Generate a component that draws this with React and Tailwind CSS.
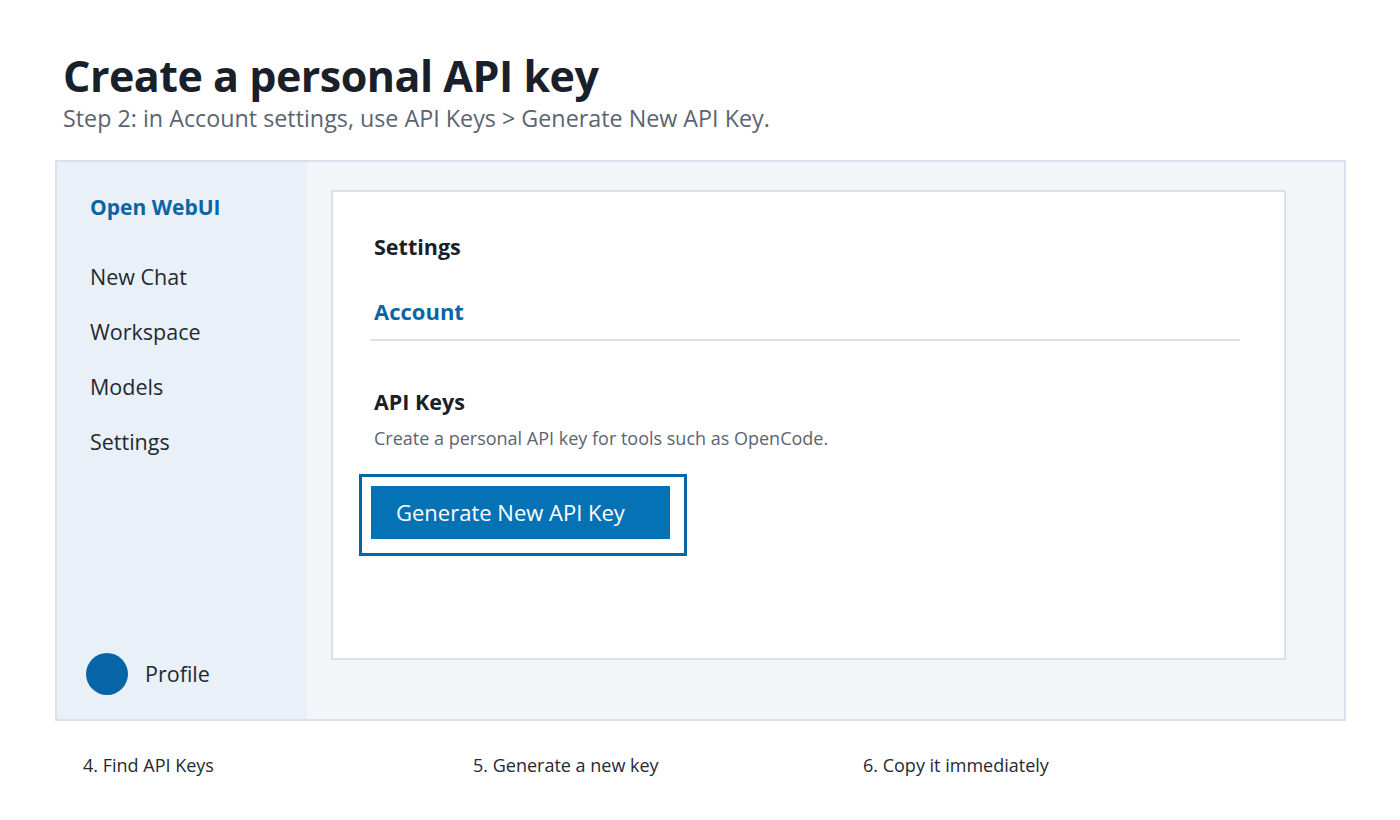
import React from 'react';

const navItems = ['New Chat', 'Workspace', 'Models', 'Settings'];
const steps = ['4. Find API Keys', '5. Generate a new key', '6. Copy it immediately'];

function Sidebar() {
  return (
    <aside className="w-[250px] shrink-0 bg-[#e9f0f7] flex flex-col pl-[33px] pt-[31px] pb-[24px]">
      <div className="text-[21px] font-bold text-[#0b65a5] leading-[28px]">Open WebUI</div>
      <nav className="mt-[42px] flex flex-col gap-[27px]">
        {navItems.map((item) => (
          <div key={item} className="text-[21.5px] leading-[28px] text-[#1f2933]">
            {item}
          </div>
        ))}
      </nav>
      <div className="mt-auto flex items-center gap-[17px] -ml-[4px]">
        <div className="w-[42px] h-[42px] rounded-full bg-[#0565a6]" />
        <span className="text-[21.5px] text-[#1f2933] leading-[28px]">Profile</span>
      </div>
    </aside>
  );
}

function SettingsCard() {
  return (
    <div className="h-[470px] bg-white border-2 border-[#d8e1eb] pl-[41px] pr-[44px] pt-[41px]">
      <div className="text-[21.5px] font-bold text-[#1a202a] leading-[28px]">Settings</div>
      <div className="mt-[36px] text-[22px] font-bold text-[#0b65a5] leading-[28px]">Account</div>
      <div className="mt-[14px] -ml-[4px] h-[2px] bg-[#d9e2ec]" />
      <div className="mt-[47px] text-[21.5px] font-bold text-[#1a202a] leading-[28px]">API Keys</div>
      <p className="mt-[10px] text-[18px] text-[#5b6471] leading-[24px]">
        Create a personal API key for tools such as OpenCode.
      </p>
      <div className="mt-[24px] -ml-[15px] inline-block border-[3px] border-[#0565a6] pt-[9px] pl-[9px] pr-[14px] pb-[14px]">
        <button className="block w-[299px] h-[53px] bg-[#0572b5] text-white text-[22px] text-left pl-[25px]">
          Generate New API Key
        </button>
      </div>
    </div>
  );
}

export default function App() {
  return (
    <div className="w-[1400px] h-[820px] bg-white font-['Open_Sans',sans-serif] text-[#1f2933]">
      <header className="pl-[63px] pt-[50px]">
        <h1 className="text-[43px] font-bold leading-[52px] text-[#1a202a] tracking-[-0.5px]">Create a personal API key</h1>
        <p className="text-[23.3px] leading-[30px] text-[#5b6471] mt-[1px]">
          Step 2: in Account settings, use API Keys &gt; Generate New API Key.
        </p>
      </header>
      <div className="ml-[55px] mt-[27px] w-[1291px] h-[561px] border-2 border-[#d9e2ec] bg-[#f3f6f9] flex">
        <Sidebar />
        <main className="flex-1 pl-[24px] pr-[58px] pt-[28px]">
          <SettingsCard />
        </main>
      </div>
      <div className="ml-[83px] mt-[32px] flex">
        {steps.map((s) => (
          <div key={s} className="w-[390px] text-[18px] leading-[24px] text-[#1f2933]">
            {s}
          </div>
        ))}
      </div>
    </div>
  );
}
